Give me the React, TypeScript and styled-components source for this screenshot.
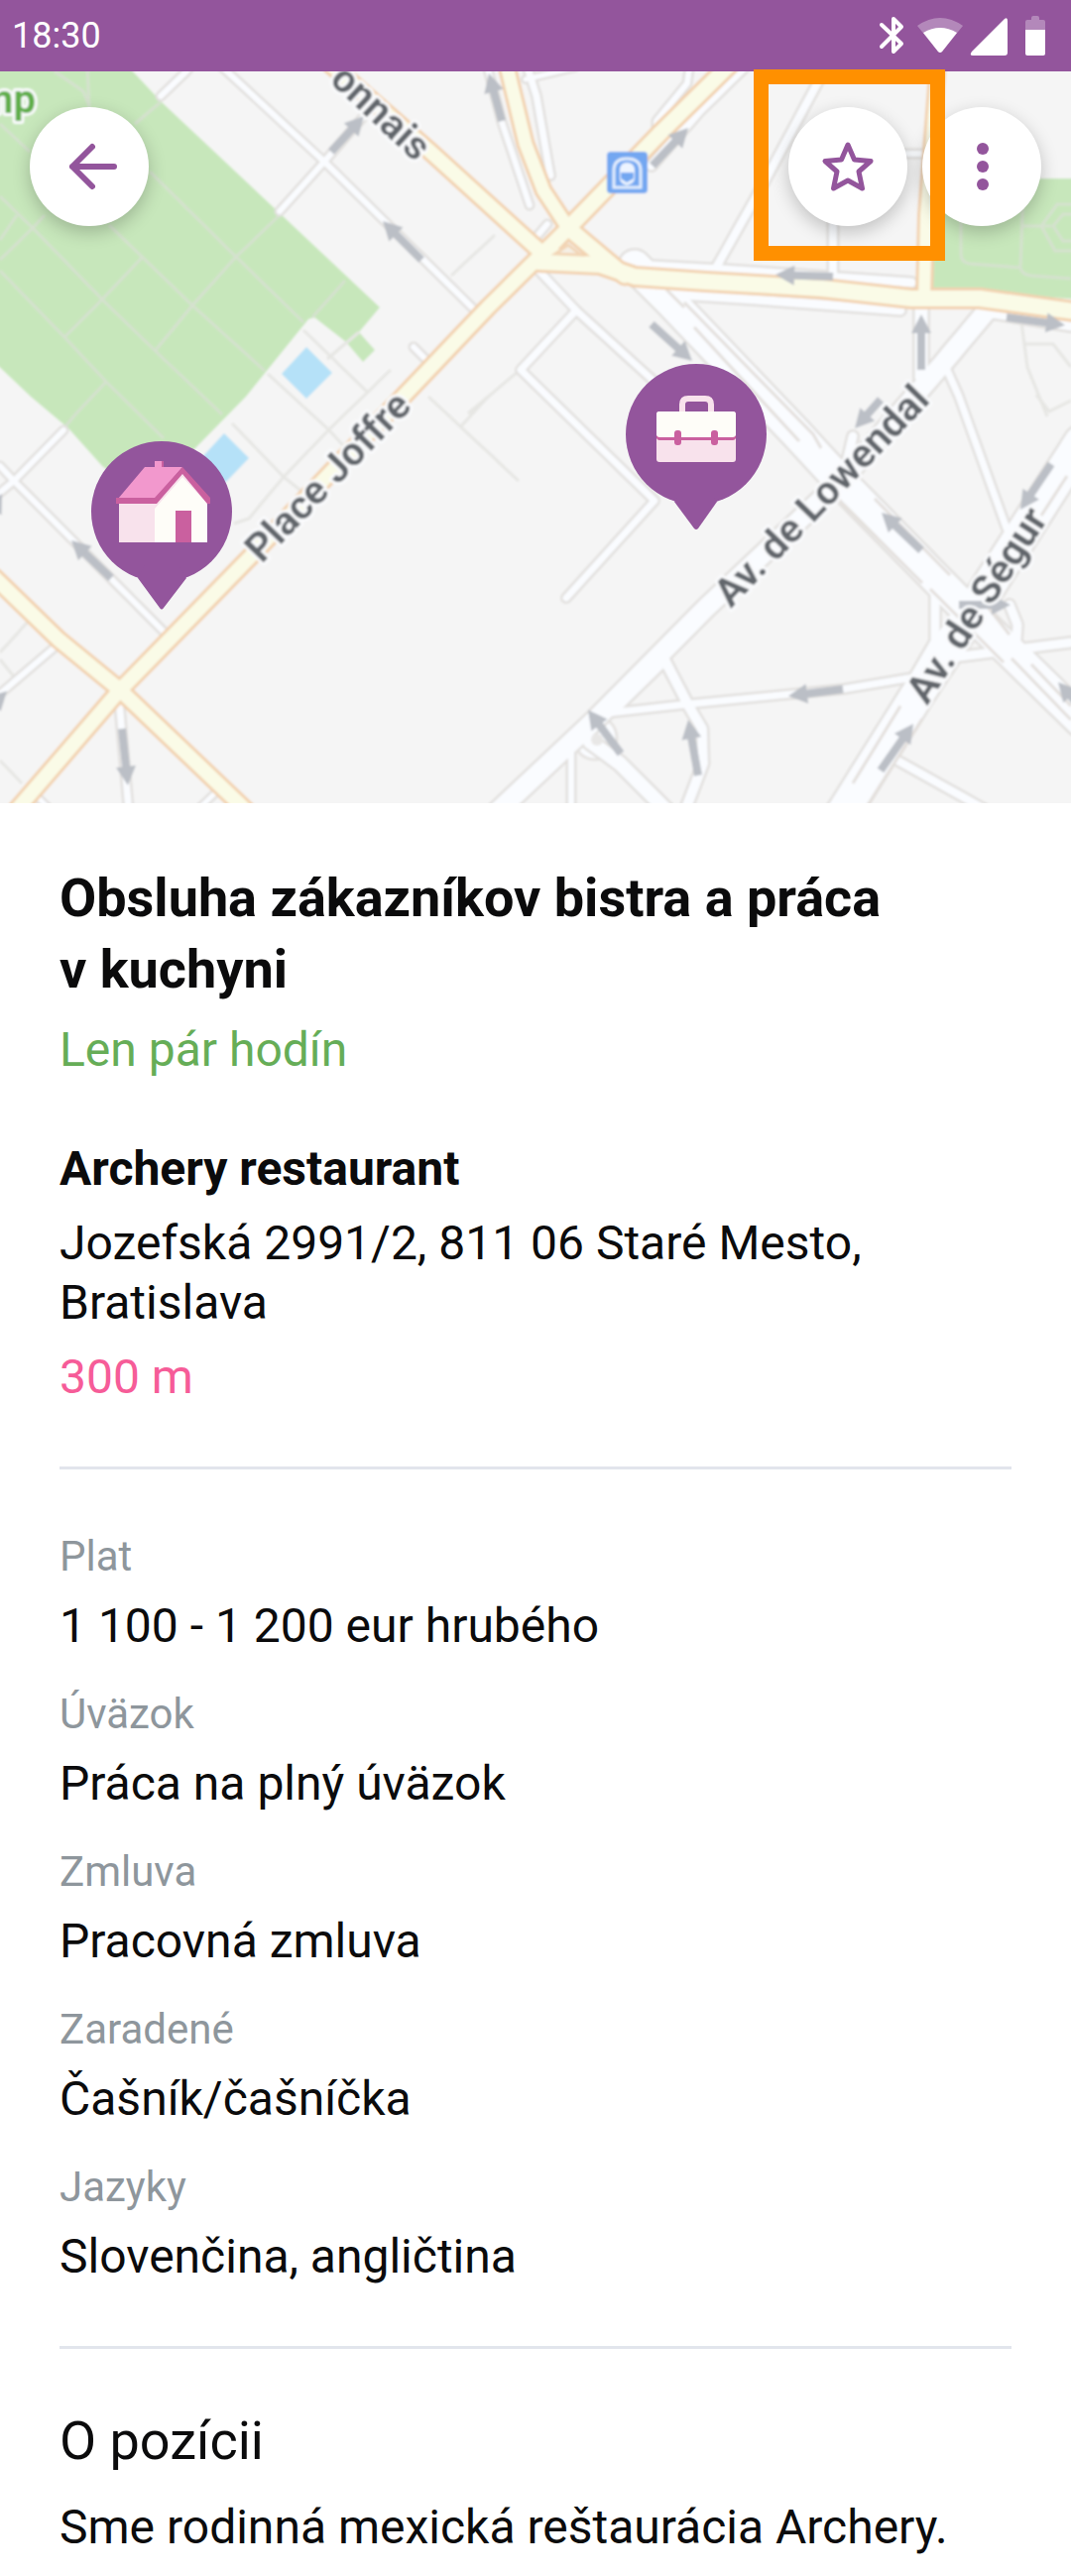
import React from "react";
import styled, { createGlobalStyle } from "styled-components";

const color = {
  brand: "#93559c",
  ink: "#0b0b0c",
  muted: "#8e969c",
  green: "#66ad57",
  pink: "#f65c98",
  line: "#e2e5ec",
  highlight: "#ff9000",
};

const GlobalStyle = createGlobalStyle`
  * { box-sizing: border-box; }
  body {
    margin: 0;
    background: #fff;
    color: ${color.ink};
    font-family: Roboto, "Noto Sans", sans-serif;
    font-size: 48px;
    line-height: 60px;
  }
`;

/* ---------- layout ---------- */

const Screen = styled.div`
  display: flex;
  flex-direction: column;
  width: 100%;
`;

const StatusBar = styled.header`
  display: flex;
  align-items: center;
  justify-content: space-between;
  height: 72px;
  padding: 0 12px;
  background: ${color.brand};
  color: #fff;
`;

const Clock = styled.time`
  font-size: 36px;
  line-height: 42px;
`;

const StatusIcons = styled.div`
  display: flex;
  align-items: center;
`;

const StatusIcon = styled.svg`
  display: block;
  width: 48px;
  height: 48px;
`;

const MapSection = styled.section`
  position: relative;
  height: 738px;
  background: #f5f5f5;
`;

const MapCanvas = styled.svg`
  display: block;
  width: 100%;
  height: 100%;
`;

const MapLabel = styled.text<{ $size?: number; $tone?: string }>`
  font-family: Roboto, "Noto Sans", sans-serif;
  font-weight: 700;
  font-size: ${(p) => p.$size ?? 40}px;
  fill: ${(p) => p.$tone ?? "#62666c"};
  stroke: #fafbfd;
  stroke-width: 6px;
  stroke-linejoin: round;
  paint-order: stroke;
`;

const Toolbar = styled.nav`
  position: absolute;
  top: 36px;
  left: 30px;
  right: 30px;
  display: flex;
  justify-content: space-between;
`;

const ToolbarGroup = styled.div`
  display: flex;
  gap: 15px;
`;

const RoundButton = styled.button`
  display: block;
  width: 120px;
  height: 120px;
  padding: 0;
  border: 0;
  border-radius: 50%;
  background: #fff;
  color: ${color.brand};
  box-shadow: 0 6px 18px rgba(0, 0, 0, 0.22);
  cursor: pointer;

  svg {
    display: block;
    width: 100%;
    height: 100%;
  }
`;

const Highlighted = styled.div`
  position: relative;
  z-index: 1;

  &::after {
    content: "";
    position: absolute;
    inset: -38px -38px -35px -35px;
    border: 15px solid ${color.highlight};
    pointer-events: none;
  }
`;

const Content = styled.main`
  padding: 60px 60px 18px;
`;

const Section = styled.section`
  & + & {
    margin-top: 60px;
    padding-top: 60px;
    border-top: 3px solid ${color.line};
  }
`;

const Title = styled.h1`
  margin: 0;
  max-width: 900px;
  font-size: 54px;
  line-height: 72px;
  font-weight: 700;
`;

const Company = styled.h2`
  margin: 60px 0 0;
  font-size: 48px;
  line-height: 60px;
  font-weight: 700;
`;

const Line = styled.p<{ $tone?: string }>`
  margin: 15px 0 0;
  color: ${(p) => p.$tone ?? "inherit"};
`;

const Facts = styled.dl`
  display: flex;
  flex-direction: column;
  gap: 31px;
  margin: 0;
`;

const Fact = styled.div`
  display: flex;
  flex-direction: column;
  gap: 12px;
`;

const FactName = styled.dt`
  font-size: 42px;
  line-height: 56px;
  color: ${color.muted};
`;

const FactValue = styled.dd`
  margin: 0;
`;

const Heading = styled.h2`
  margin: 0;
  font-size: 54px;
  line-height: 66px;
  font-weight: 400;
`;

const Description = styled.p`
  margin: 24px 0 0;
`;

/* ---------- map data ---------- */

type Road = [points: string, width: number];

const whiteRoads: Road[] = [
  ["162,97 188,72 194,64", 11],
  ["218,62 327,163 479,313", 11],
  ["282,213 327,163 367,117", 11],
  ["417,350 436,369", 11],
  ["530,62 541,97 555,177", 12],
  ["490,62 506,123 534,207", 11],
  ["530,80 580,68", 10],
  ["756,62 705,112 657,167", 14],
  ["696,62 693,84 662,122 662,134", 11],
  ["540,240 552,226", 11],
  ["836,62 770,185 722,270", 13],
  ["905,155 932,155", 11],
  ["840,220 840,280", 13],
  ["622,266 729,272 919,285", 14],
  ["668,296 760,302 908,313", 14],
  ["1000,316 1080,329", 14],
  ["535,264 581,313 660,385 690,420", 12],
  ["581,313 525,373 660,505 571,603", 12],
  ["929,305 929,380", 18],
  ["955,373 967,400 1015,533", 12],
  ["998,310 946,372 850,483 712,613 599,727 500,820", 24],
  ["860,440 850,483", 14],
  ["943,600 943,647 922,683", 14],
  ["922,683 850,695 695,710 605,720", 12],
  ["953,664 1080,648", 14],
  ["1018,610 1026,630 1024,660", 14],
  ["671,667 695,713 708,735 709,770 690,820", 15],
  ["625,712 671,667", 12],
  ["595,748 625,770 675,820", 19],
  ["576,755 576,820", 11],
  ["905,767 1000,820", 13],
  ["0,470 14,485 165,637", 11],
  ["64,434 14,485 -4,500", 11],
  ["56,652 -5,704", 11],
  ["120,705 130,820", 12],
  ["222,795 200,816", 10],
  ["34,800 50,816", 10],
];

const avenues: Road[] = [
  ["640,268 678,306 802,436 850,488 960,600 1090,727", 36],
  ["1090,446 990,602 924,702 850,820", 38],
];

const yellowRoads: Road[] = [
  ["573,230 492,310 413,393 251,563 120,697 14,820", 20],
  ["330,62 434,153 543,252 575,262", 20],
  ["510,62 530,145 548,192 573,230", 19],
  ["739,62 667,133 573,230", 21],
  ["573,230 630,278", 21],
  ["573,230 548,256", 20],
  ["543,264 605,267 640,279 712,284 829,291 919,301 988,301 1090,315", 22],
  ["946,62 934,217 932,300", 18],
  ["-6,582 59,645 120,695 251,820", 20],
];

const greenPaths = [
  "55,72 84,92 90,107",
  "88,66 90,110",
  "0,125 30,153",
  "162,103 136,125",
  "151,173 238,259 306,325",
  "282,217 238,259 194,308 157,353",
  "110,227 194,308 267,374",
  "0,198 33,230 103,302 165,362 224,418",
  "0,273 65,340 107,385 165,442",
  "143,260 103,302 65,340",
  "45,217 33,230 0,262",
  "17,217 0,242",
  "107,385 76,418 66,430",
  "348,283 315,320",
];

const footPaths = [
  "306,333 334,360 370,395",
  "270,377 331,433 346,449",
  "234,427 286,481 306,497",
  "394,373 331,434 286,481 251,523 236,528",
  "432,400 523,485",
  "492,400 465,430",
  "499,237 455,278",
  "540,360 472,417",
  "362,335 330,362",
  "0,658 30,625",
  "0,665 20,690",
  "0,767 22,790",
  "1030,325 1036,370 1056,420",
  "1034,347 1062,347 1080,370",
  "1045,398 1058,415 1080,404",
];

const medians = [
  "672,292 690,310",
  "690,305 820,438 828,452",
  "700,330 806,445",
  "845,503 930,588",
  "882,503 958,580",
  "938,594 1012,668",
  "996,612 1018,640",
  "1020,664 1080,726",
  "1040,670 1080,712",
  "908,712 860,790",
  "930,725 875,812",
  "1076,480 1050,520",
];

/* one-way arrows: tail x, tail y, tip x, tip y */
const arrows = [
  [334, 153, 367, 117],
  [425, 262, 386, 223],
  [506, 122, 493, 74],
  [658, 167, 694, 129],
  [840, 279, 782, 277],
  [1015, 320, 1074, 328],
  [657, 327, 698, 364],
  [929, 373, 929, 317],
  [888, 403, 862, 432],
  [929, 555, 889, 517],
  [1060, 468, 1029, 514],
  [888, 777, 921, 730],
  [967, 610, 1019, 610],
  [850, 695, 795, 702],
  [704, 782, 694, 726],
  [626, 760, 593, 716],
  [112, 583, 72, 545],
  [123, 735, 129, 792],
  [1092, 716, 1067, 688],
  [-20, 724, 7, 697],
  [-8, 516, 2, 498],
];

const Arrow = ({ at }: { at: number[] }) => {
  const [x1, y1, x2, y2] = at;
  const length = Math.hypot(x2 - x1, y2 - y1);
  const angle = (Math.atan2(y2 - y1, x2 - x1) * 180) / Math.PI;
  return (
    <g transform={`translate(${x1} ${y1}) rotate(${angle})`} fill="#bbbfc6">
      <rect x={0} y={-4} width={length - 12} height={8} />
      <path d={`M${length} 0L${length - 19} -10V10Z`} />
    </g>
  );
};

const RoadSet = ({ roads, casing, fill, edge }: { roads: Road[]; casing: string; fill: string; edge: number }) => (
  <g fill="none" strokeLinejoin="round">
    {roads.map(([points, width]) => (
      <polyline key={`c${points}`} points={points} stroke={casing} strokeWidth={width} strokeLinecap="round" />
    ))}
    {roads.map(([points, width]) => (
      <polyline key={`f${points}`} points={points} stroke={fill} strokeWidth={width - edge} strokeLinecap="round" />
    ))}
  </g>
);

const HomePin = () => (
  <g>
    <circle cx={163} cy={516} r={71} fill={color.brand} />
    <path d="M139 583L161 613Q163 616 165 613L188 583L180 570H146Z" fill={color.brand} />
    <path d="M120 505H160V547H120Z" fill="#f8e2ec" />
    <path d="M156 508L184 475L209 504V547H156Z" fill="#f8e2ec" />
    <path d="M156 513L184 481L209 508V547H156Z" fill="#fefdf8" />
    <path d="M156 465H163V474H156Z" fill="#f298cd" />
    <path d="M163 465H165V474H163Z" fill="#ca609f" />
    <path d="M146 471H184L157 503H119Z" fill="#f298cd" />
    <path d="M117 502H156L184 471L212 502V508H209L184 478L158 508H117Z" fill="#ca609f" />
    <path d="M177 515H193V547H177Z" fill="#ca609f" />
  </g>
);

const WorkPin = () => (
  <g>
    <circle cx={702} cy={438} r={71} fill={color.brand} />
    <path d="M680 506L700 533Q702 535 704 533L723 506L715 495H688Z" fill={color.brand} />
    <path d="M688 417V408Q688 402 694 402H711Q717 402 717 408V417" fill="none" stroke="#f8e2ec" strokeWidth={6} />
    <rect x={662} y={415} width={80} height={51} rx={3} fill="#f8e2ec" />
    <path d="M662 441V418Q662 415 665 415H739Q742 415 742 418V441Z" fill="#fefdf8" />
    <path d="M662 439Q663 441 665 441H739Q741 441 742 439V442Q741 444 739 444H665Q663 444 662 442Z" fill="#ca609f" />
    <rect x={680} y={434} width={7} height={15} rx={3} fill="#ca609f" />
    <rect x={717} y={434} width={7} height={15} rx={3} fill="#ca609f" />
  </g>
);

const LocationMap = () => (
  <MapCanvas viewBox="0 72 1080 738" preserveAspectRatio="xMidYMid slice" role="img" aria-label="Mapa">
    <defs>
      <filter id="soft" x="0" y="0" width="100%" height="100%">
        <feGaussianBlur stdDeviation="1" />
      </filter>
    </defs>
    <g filter="url(#soft)">
      <rect x={-20} y={50} width={1120} height={780} fill="#f5f5f5" />
      <path
        d="M-10 50H112L134 72L163 103L383 310L362 335L378 353L366 365L349 345L317 320L311 322L248 400L196 453L150 505L103 470L69 432L31 400L-10 361Z"
        fill="#c7e7bb"
      />
      <path d="M936 180H1090V302L936 292Z" fill="#c7e7bb" />
      <path d="M309 350L335 376L309 402L284 377Z" fill="#b5e1f8" />
      <path d="M226 437L251 462L227 487L203 462Z" fill="#b5e1f8" />
      <g fill="none" stroke="#d5e1cf" strokeWidth={3}>
        {greenPaths.map((points) => (
          <polyline key={points} points={points} />
        ))}
        <path d="M969 190V256Q969 265 978 266L1030 270M1032 190L1029 270Q1030 277 1040 278L1080 281M1032 228H1060M1090 206H1066L1050 228L1064 253H1090M1090 216H1072L1062 228L1072 243H1090" />
      </g>
      <g fill="none" stroke="#e6e6e3" strokeWidth={3}>
        {footPaths.map((points) => (
          <polyline key={points} points={points} />
        ))}
      </g>
      <circle cx={600} cy={744} r={22} fill="#fafcff" stroke="#e5e3e1" strokeWidth={3} />
      <RoadSet roads={[...whiteRoads, ...avenues]} casing="#e2e0de" fill="#fafcff" edge={5} />
      <g fill="none" stroke="#e3dfdc" strokeWidth={3}>
        {medians.map((points) => (
          <polyline key={points} points={points} />
        ))}
      </g>
      <circle cx={602} cy={746} r={6} fill="#e8e7e6" />
      <RoadSet roads={yellowRoads} casing="#f2d2b0" fill="#fafbe7" edge={6} />
      <path d="M560 256L573 247L586 257Z" fill="#f5f0e6" stroke="#f2d5b6" strokeWidth={3} />
      {arrows.map((at) => (
        <Arrow key={at.join()} at={at} />
      ))}
      <g>
        <rect x={612} y={153} width={41} height={42} rx={4} fill="#73a7f1" />
        <path d="M619 189V172Q619 160 632 160Q646 160 646 172V189Z" fill="none" stroke="#e4eefd" strokeWidth={3} />
        <path d="M625 172Q625 164 632 164Q640 164 640 172V180Q640 185 632 187Q625 185 625 180Z" fill="#edf4ff" />
        <path d="M626 174H639V180L632 184L626 180Z" fill="#73a7f1" />
      </g>
      <MapLabel textAnchor="end" transform="translate(419 164) rotate(43)">
        onnais
      </MapLabel>
      <MapLabel transform="translate(264 569) rotate(-46)">Place Joffre</MapLabel>
      <MapLabel transform="translate(737 614) rotate(-46)">Av. de Lowendal</MapLabel>
      <MapLabel transform="translate(935 712) rotate(-57)">Av. de Ségur</MapLabel>
      <MapLabel $tone="#5fae4a" textAnchor="end" x={36} y={114}>
        mp
      </MapLabel>
    </g>
    <HomePin />
    <WorkPin />
  </MapCanvas>
);

/* ---------- screen ---------- */

const facts = [
  ["Plat", "1 100 - 1 200 eur hrubého"],
  ["Úväzok", "Práca na plný úväzok"],
  ["Zmluva", "Pracovná zmluva"],
  ["Zaradené", "Čašník/čašníčka"],
  ["Jazyky", "Slovenčina, angličtina"],
];

export default function App() {
  return (
    <Screen>
      <GlobalStyle />
      <StatusBar>
        <Clock>18:30</Clock>
        <StatusIcons>
          <StatusIcon viewBox="0 0 48 48" aria-hidden="true">
            <path
              d="M13 13L33 32L25 40V7L33 15L13 35"
              fill="none"
              stroke="#fff"
              strokeWidth={4}
              strokeLinejoin="round"
              strokeLinecap="round"
            />
          </StatusIcon>
          <StatusIcon viewBox="0 0 48 48" aria-hidden="true">
            <path d="M1 14Q24 -2 47 14L26 40Q24 42 22 40Z" fill="#fff" opacity={0.3} />
            <path d="M7 21Q24 11 41 21L26 40Q24 42 22 40Z" fill="#fff" />
          </StatusIcon>
          <StatusIcon viewBox="0 0 48 48" aria-hidden="true">
            <path d="M41 7Q44 5 44 9V41Q44 44 41 44H9Q5 44 8 40Z" fill="#fff" />
          </StatusIcon>
          <StatusIcon viewBox="0 0 48 48" aria-hidden="true">
            <path d="M14 18V10Q14 8 16 8H20V6Q20 4 22 4H26Q28 4 28 6V8H32Q34 8 34 10V18Z" fill="#fff" opacity={0.3} />
            <path d="M14 18H34V42Q34 44 32 44H16Q14 44 14 42Z" fill="#fff" />
          </StatusIcon>
        </StatusIcons>
      </StatusBar>

      <MapSection>
        <LocationMap />
        <Toolbar>
          <RoundButton type="button" aria-label="Späť">
            <svg viewBox="0 0 120 120" fill="none" stroke="currentColor" strokeWidth={6} strokeLinecap="round" strokeLinejoin="round">
              <path d="M85 60H43M63 40L43 60L63 80" />
            </svg>
          </RoundButton>
          <ToolbarGroup>
            <Highlighted>
              <RoundButton type="button" aria-label="Uložiť">
                <svg viewBox="0 0 120 120" fill="none" stroke="currentColor" strokeWidth={5} strokeLinejoin="round">
                  <path d="M60 38L66.500 53L83 54.500L71 65L74.500 82L60 74L45.500 82L49 65L37 54.500L53.500 53Z" />
                </svg>
              </RoundButton>
            </Highlighted>
            <RoundButton type="button" aria-label="Viac">
              <svg viewBox="0 0 120 120" fill="currentColor">
                <circle cx={61} cy={42} r={6} />
                <circle cx={61} cy={60} r={6} />
                <circle cx={61} cy={78} r={6} />
              </svg>
            </RoundButton>
          </ToolbarGroup>
        </Toolbar>
      </MapSection>

      <Content>
        <Section>
          <Title>Obsluha zákazníkov bistra a práca v&nbsp;kuchyni</Title>
          <Line $tone={color.green}>Len pár hodín</Line>
          <Company>Archery restaurant</Company>
          <Line>Jozefská 2991/2, 811 06 Staré Mesto, Bratislava</Line>
          <Line $tone={color.pink}>300 m</Line>
        </Section>
        <Section>
          <Facts>
            {facts.map(([name, value]) => (
              <Fact key={name}>
                <FactName>{name}</FactName>
                <FactValue>{value}</FactValue>
              </Fact>
            ))}
          </Facts>
        </Section>
        <Section>
          <Heading>O pozícii</Heading>
          <Description>Sme rodinná mexická reštaurácia Archery.</Description>
        </Section>
      </Content>
    </Screen>
  );
}
